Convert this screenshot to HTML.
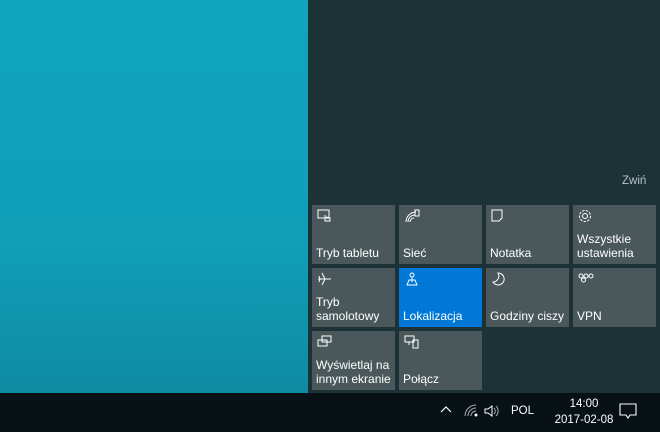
<!DOCTYPE html>
<html><head><meta charset="utf-8"><style>
*{margin:0;padding:0;box-sizing:border-box}
body{width:660px;height:432px;overflow:hidden;position:relative;font-family:"Liberation Sans",sans-serif;background:#0e1f25}
.bg{position:absolute;left:0;top:0;width:308px;height:393px;background:linear-gradient(180deg,#10a4bf 0%,#0fa0b8 60%,#0f8ba2 100%)}
.panel{position:absolute;left:308px;top:0;width:352px;height:393px;background:#1c3237}
.tb{position:absolute;left:0;top:393px;width:660px;height:39px;background:#071116}
.tile{position:absolute;width:83px;height:59px;background:#4a575b;color:#fff;font-size:12px;line-height:14px}
.tile .t{position:absolute;left:4px;bottom:4px;white-space:nowrap}
.tile svg{position:absolute;left:5px;top:4px}
.on{background:#0078d7}
.tr{position:absolute;color:#fff;font-size:11px}
</style></head><body>
<div class="bg"></div>
<div class="panel"></div>
<div style="position:absolute;left:622px;top:175px;color:#b8c2c4;font-size:11.5px">Zwiń</div>

<div class="tile" style="left:312px;top:205px"><svg width="16" height="14" viewBox="0 0 16 14" fill="none" stroke="#fff" stroke-width="1"><rect x="1" y="1" width="11" height="8"/><path d="M8 6v6h5v-3l-4-1"/></svg><div class="t">Tryb tabletu</div></div>
<div class="tile" style="left:399px;top:205px"><svg width="16" height="14" viewBox="0 0 16 14" fill="none" stroke="#fff" stroke-width="1"><path d="M2 13a10 10 0 0 1 10-10M4 13a7 7 0 0 1 7-7M6 13a4 4 0 0 1 4-4"/><rect x="11" y="1" width="4" height="6"/></svg><div class="t">Sieć</div></div>
<div class="tile" style="left:486px;top:205px"><svg width="16" height="14" viewBox="0 0 16 14" fill="none" stroke="#fff" stroke-width="1"><path d="M1 1h10v8l-3 3H1z"/></svg><div class="t">Notatka</div></div>
<div class="tile" style="left:573px;top:205px"><svg width="16" height="14" viewBox="0 0 16 14" fill="none" stroke="#fff" stroke-width="1"><circle cx="7" cy="7" r="2.5"/><circle cx="7" cy="7" r="5.5" stroke-dasharray="2.5 1.3"/></svg><div class="t">Wszystkie<br>ustawienia</div></div>

<div class="tile" style="left:312px;top:268px"><svg width="16" height="14" viewBox="0 0 16 14" fill="none" stroke="#fff" stroke-width="1"><path d="M1 7h13M5 1l3 6-3 6M2 4l1 3-1 3"/></svg><div class="t">Tryb<br>samolotowy</div></div>
<div class="tile on" style="left:399px;top:268px"><svg width="16" height="14" viewBox="0 0 16 14" fill="none" stroke="#fff" stroke-width="1"><circle cx="8" cy="3" r="2"/><path d="M8 5v5M3 13l2-5h6l2 5z"/></svg><div class="t">Lokalizacja</div></div>
<div class="tile" style="left:486px;top:268px"><svg width="16" height="14" viewBox="0 0 16 14" fill="none" stroke="#fff" stroke-width="1"><path d="M7 1a6 6 0 1 1-5 9a6 6 0 0 0 5-9z"/></svg><div class="t">Godziny ciszy</div></div>
<div class="tile" style="left:573px;top:268px"><svg width="16" height="14" viewBox="0 0 16 14" fill="none" stroke="#fff" stroke-width="1"><circle cx="3" cy="4" r="2"/><circle cx="8" cy="4" r="2"/><circle cx="13" cy="4" r="2"/><circle cx="5.5" cy="8" r="2"/></svg><div class="t">VPN</div></div>

<div class="tile" style="left:312px;top:331px"><svg width="16" height="14" viewBox="0 0 16 14" fill="none" stroke="#fff" stroke-width="1"><rect x="5" y="1" width="9" height="6"/><rect x="1" y="5" width="9" height="6"/></svg><div class="t">Wyświetlaj na<br>innym ekranie</div></div>
<div class="tile" style="left:399px;top:331px"><svg width="16" height="14" viewBox="0 0 16 14" fill="none" stroke="#fff" stroke-width="1"><rect x="1" y="1" width="9" height="6"/><path d="M5 7v3"/><rect x="9" y="5" width="5" height="8"/></svg><div class="t">Połącz</div></div>

<div class="tb"></div>
<svg style="position:absolute;left:440px;top:405px" width="12" height="8" viewBox="0 0 12 8" fill="none" stroke="#fff" stroke-width="1.2"><path d="M1 7l5-5 5 5"/></svg>
<svg style="position:absolute;left:463px;top:403px" width="16" height="14" viewBox="0 0 16 14" fill="none" stroke="#aaa" stroke-width="1"><path d="M2 13a11 11 0 0 1 11-11M5 13a8 8 0 0 1 8-8M8 13a5 5 0 0 1 5-5"/><circle cx="13" cy="12" r="1" fill="#fff" stroke="#fff"/></svg>
<svg style="position:absolute;left:484px;top:404px" width="16" height="14" viewBox="0 0 16 14" fill="none" stroke="#fff" stroke-width="1"><path d="M1 5h3l4-3v10l-4-3H1z"/><path d="M10 4a4 4 0 0 1 0 6M12 2a7 7 0 0 1 0 10" stroke="#aaa"/></svg>
<div class="tr" style="left:511px;top:405px;font-size:11.5px">POL</div>
<div class="tr" style="left:553px;top:396px;font-size:11.5px;text-align:center;width:62px;line-height:16px">14:00<br>2017-02-08</div>
<svg style="position:absolute;left:619px;top:403px" width="18" height="17" viewBox="0 0 18 17" fill="none" stroke="#fff" stroke-width="1.1"><path d="M1 1h16v11h-6l-2 3-2-3H1z"/></svg>
</body></html>
